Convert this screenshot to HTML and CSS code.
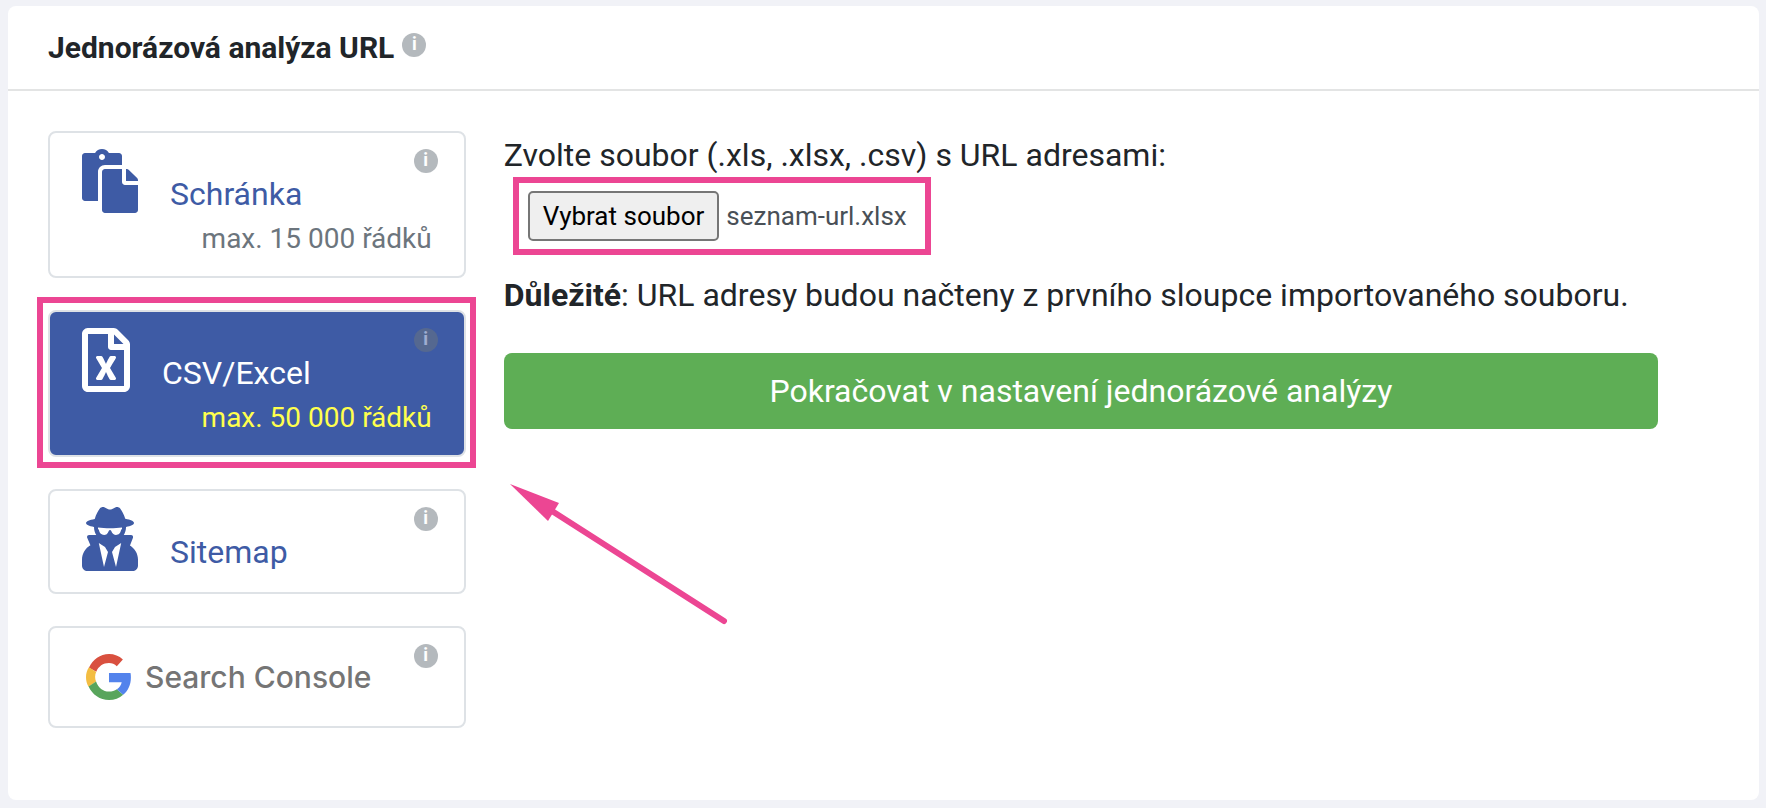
FILE: index.html
```html
<!DOCTYPE html>
<html lang="cs">
<head>
    <meta charset="UTF-8">
    <meta name="viewport" content="width=device-width, initial-scale=1.0">
    <title>Jednorázová analýza URL</title>
    <link rel="stylesheet" href="styles.css">
</head>
<body>

    <div class="card">
        <div class="card-header">
            <h1>Jednorázová analýza URL</h1>
            <span class="info">i</span>
        </div>

        <div class="card-body">
            <!-- Data sources -->
            <nav class="sources">
                <a href="#" class="source">
                    <svg class="icon" width="56" height="64" viewBox="0 0 448 512"><path d="M128 184c0-30.879 25.122-56 56-56h136V56c0-13.255-10.745-24-24-24h-80.61C204.306 12.89 183.637 0 160 0s-44.306 12.89-55.39 32H24C10.745 32 0 42.745 0 56v336c0 13.255 10.745 24 24 24h104V184zm32-144c13.255 0 24 10.745 24 24s-10.745 24-24 24-24-10.745-24-24 10.745-24 24-24zm184 248h104v200c0 13.255-10.745 24-24 24H184c-13.255 0-24-10.745-24-24V184c0-13.255 10.745-24 24-24h136v104c0 13.2 10.8 24 24 24zm104-38.059V256h-96v-96h6.059a24 24 0 0 1 16.97 7.029l65.941 65.941a24.002 24.002 0 0 1 7.03 16.971z"/></svg><span class="name">Schránka</span>
                    <span class="limit">max. 15 000 řádků</span>
                    <span class="info">i</span>
                </a>
                <a href="#" class="source active highlight">
                    <svg class="icon" width="48" height="64" viewBox="0 0 384 512"><path d="M369.9 97.9L286 14C277 5 264.8-.1 252.1-.1H48C21.5 0 0 21.5 0 48v416c0 26.5 21.5 48 48 48h288c26.5 0 48-21.5 48-48V131.9c0-12.7-5.1-25-14.1-34zM332.1 128H256V51.9l76.1 76.1zM48 464V48h160v104c0 13.3 10.7 24 24 24h104v288H48zm212-240h-28.8c-4.4 0-8.4 2.4-10.5 6.3-18 33.1-22.2 42.4-28.6 57.7-13.9-29.1-6.9-17.3-28.6-57.7-2.1-3.9-6.2-6.3-10.6-6.3H124c-9.3 0-15 10-10.4 18l46.3 78-46.3 78c-4.7 8 1.1 18 10.4 18h28.9c4.4 0 8.4-2.4 10.5-6.3 21.7-40 23-45 28.6-57.7 14.9 30.2 5.9 15.9 28.6 57.7 2.1 3.9 6.2 6.3 10.6 6.3H260c9.3 0 15-10 10.4-18L224 320c.7-1.1 30.3-50.5 46.3-78 4.7-8-1.1-18-10.3-18z"/></svg><span class="name">CSV/Excel</span>
                    <span class="limit">max. 50 000 řádků</span>
                    <span class="info">i</span>
                </a>
                <a href="#" class="source">
                    <svg class="icon" width="56" height="64" viewBox="0 0 448 512"><path d="M383.9 308.3l23.9-62.6c4-10.5-3.7-21.7-15-21.7h-58.5c11-18.9 17.8-40.6 17.8-64v-.3c39.2-7.8 64-19.1 64-31.7 0-13.3-27.3-25.1-70.1-33-9.2-32.8-27-65.8-40.6-82.8-9.5-11.9-25.9-15.6-39.5-8.8l-27.6 13.8c-9 4.5-19.6 4.5-28.6 0L182.1 3.4c-13.6-6.8-30-3.1-39.5 8.8-13.5 17-31.4 50-40.6 82.8-42.7 7.9-70 19.7-70 33 0 12.6 24.8 23.9 64 31.7v.3c0 23.4 6.8 45.1 17.8 64H56.3c-11.5 0-19.2 11.7-14.7 22.3l25.8 60.2C27.3 329.8 0 372.7 0 422.4v44.8C0 491.9 20.1 512 44.8 512h358.4c24.7 0 44.8-20.1 44.8-44.8v-44.8c0-48.4-25.8-90.4-64.1-114.1zM176 480l-41.6-192 49.6 32 24 40-32 120zm96 0l-32-120 24-40 49.6-32L272 480zm41.7-298.5c-3.9 11.9-7 24.6-16.5 33.4-10.1 9.3-48 22.4-64-25-2.8-8.4-15.4-8.4-18.3 0-17 50.2-56 32.4-64 25-9.5-8.8-12.7-21.5-16.5-33.4-.8-2.5-6.3-5.7-6.3-5.8v-10.8c28.3 3.6 61 5.8 96 5.8s67.7-2.1 96-5.8v10.8c-.1.1-5.6 3.2-6.4 5.8z"/></svg><span class="name">Sitemap</span>
                    <span class="info">i</span>
                </a>
                <a href="#" class="source">
                    <span class="gsc">
                        <svg width="45" height="46" viewBox="0 0 46 47">
                            <path fill="#d9503f" d="M3 14C7 5.500 14.500 0 23.500 0c5.500 0 10.300 2 14.200 5.500l-6.200 7C29.200 10.500 26.600 9.300 23.500 9.300c-6 0-10.800 3.500-13 8.900z"/>
                            <path fill="#f3bd42" d="M3 13.500C1 16.500 0 20 0 23.700c0 3.600.9 6.800 2.600 9.700l7.700-5.300c-1.300-3-1.300-6.600.1-9.700z"/>
                            <path fill="#58a55c" d="M2.600 33.200C6.600 41.600 14.300 47 23.500 47c5.600 0 10.700-1.900 14.500-5.400l-6.500-5.600c-2.200 1.600-5 2.400-8 2.400-6 0-11-3.900-13.200-10.300z"/>
                            <path fill="#5383ec" d="M23.500 19.500h22c.3 1.400.4 2.900.4 4.400 0 7.300-2.800 13.600-7.900 17.700L31.500 36c2.600-1.700 4.500-4.200 5-7.200h-13z"/>
                        </svg>
                        <span class="gsc-name">Search Console</span>
                    </span>
                    <span class="info">i</span>
                </a>
            </nav>

            <!-- File upload -->
            <form class="upload">
                <label class="upload-title" for="file">Zvolte soubor (.xls, .xlsx, .csv) s URL adresami:</label>
                <div class="file-field">
                    <input type="file" id="file" class="file-input" accept=".xls,.xlsx,.csv">
                    <label class="file-button" for="file">Vybrat soubor</label>
                    <span class="file-name">seznam-url.xlsx</span>
                </div>
                <p class="note"><strong>Důležité</strong>: URL adresy budou načteny z prvního sloupce importovaného souboru.</p>
                <button type="submit" class="submit">Pokračovat v nastavení jednorázové analýzy</button>
                <svg class="arrow" width="220" height="144" viewBox="0 0 220 144">
                    <path class="arrow-head" d="M0 0L49 19L38 37Z"/>
                    <path class="arrow-line" d="M42 27L214 137"/>
                </svg>
            </form>
        </div>
    </div>

</body>
</html>
```
FILE: styles.css
```css
* {
    box-sizing: border-box;
}
body {
    font-family: Roboto, 'Liberation Sans', sans-serif;
    font-size: 32px;
    line-height: 48px;
    color: #212529;
    background-color: #f1f2f7;
    margin: 0;
    padding: 6px 7px 8px 8px;
}
.card {
    background-color: white;
    border-radius: 8px;
}
.card-header {
    display: flex;
    align-items: center;
    gap: 8px;
    padding: 18px 40px 17px;
    border-bottom: 2px solid #e3e4e4;
}
h1 {
    margin: 0;
    font-size: 30px;
    font-weight: 700;
}
.info {
    width: 24px;
    height: 24px;
    border-radius: 50%;
    background-color: #6c757d;
    color: white;
    font-size: 18px;
    font-weight: 700;
    line-height: 22px;
    text-align: center;
    opacity: 0.5;
}
.card-header .info {
    margin-bottom: 6px;
}
.card-body {
    display: grid;
    grid-template-columns: 25% 1fr;
    column-gap: 38px;
    padding: 40px;
}
.source {
    display: block;
    position: relative;
    margin-bottom: 32px;
    padding: 16px 32px;
    border: 2px solid #dee2e6;
    border-radius: 8px;
    color: #3e5ba5;
    text-decoration: none;
}
.source .info {
    position: absolute;
    top: 16px;
    right: 26px;
}
.icon {
    fill: currentColor;
    vertical-align: -8px;
}
.name {
    margin-left: 32px;
}
.limit {
    display: block;
    color: #6c757d;
    font-size: 28px;
    line-height: 42px;
    text-align: right;
}
.active {
    background-color: #3e5ba5;
    color: white;
}
.active .limit {
    color: #ffff4d;
}
.highlight::after {
    content: "";
    position: absolute;
    top: -15px;
    right: -12px;
    bottom: -13px;
    left: -13px;
    border: 6px solid #ec4693;
}
.gsc {
    display: flex;
    align-items: center;
    gap: 14px;
    height: 66px;
    padding-left: 4px;
}
.gsc-name {
    color: #757575;
    font-family: Inter, sans-serif;
    font-size: 30px;
    font-weight: 500;
}
.upload {
    margin-right: 61px;
}
.upload-title {
    display: block;
}
.file-field {
    display: inline-flex;
    align-items: center;
    gap: 7px;
    margin: -2px 0 0 9px;
    padding: 8px 18px 8px 9px;
    border: 6px solid #ec4693;
    font-size: 26px;
    vertical-align: top;
}
.file-input {
    position: absolute;
    width: 1px;
    height: 1px;
    opacity: 0;
}
.file-button {
    padding: 0 13px;
    border: 2px solid #767676;
    border-radius: 5px;
    background-color: #efefef;
    color: black;
    line-height: 46px;
    cursor: pointer;
}
.file-name {
    color: #495057;
}
.note {
    margin: 16px 0 34px;
}
.submit {
    display: block;
    width: 100%;
    padding: 14px;
    border: none;
    border-radius: 8px;
    background-color: #5eae55;
    color: white;
    font-family: inherit;
    font-size: 32px;
    line-height: 48px;
    cursor: pointer;
}
.arrow {
    display: block;
    margin: 55px 0 0 6px;
}
.arrow-head {
    fill: #ec4693;
}
.arrow-line {
    fill: none;
    stroke: #ec4693;
    stroke-width: 6;
    stroke-linecap: round;
}
```
